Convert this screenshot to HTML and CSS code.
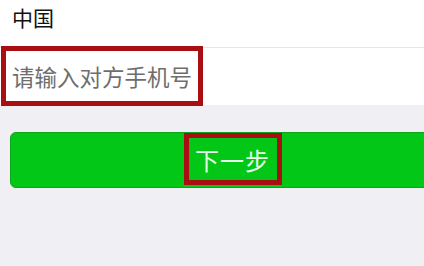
FILE: index.html
```html
<!DOCTYPE html>
<html lang="zh">
<head>
<meta charset="utf-8">
<link rel="stylesheet" href="styles.css">
</head>
<body>
<div class="page">
  <div class="header"><span class="country">中国</span></div>
  <div class="input-row">
    <div class="mark input-mark"><span class="placeholder">请输入对方手机号</span></div>
  </div>
  <div class="actions">
    <div class="btn"><span class="mark btn-mark">下一步</span></div>
  </div>
</div>
</body>
</html>
```
FILE: styles.css
```css
html, body {
  margin: 0;
  padding: 0;
}
body {
  width: 424px;
  height: 266px;
  overflow: hidden;
  background: #efeff4;
  font-family: "Noto Sans CJK SC", "Noto Sans", sans-serif;
}
.page {
  width: 424px;
  height: 266px;
  overflow: hidden;
}
.header {
  height: 47px;
  background: #ffffff;
  padding-left: 12px;
  box-sizing: border-box;
}
.country {
  display: block;
  font-size: 21px;
  line-height: 34px;
  color: #111;
}
.input-row {
  height: 58px;
  background: #ffffff;
  border-top: 1px solid #e6e6e6;
  box-sizing: border-box;
  position: relative;
}
.mark {
  border: 5px solid #a90f12;
  box-sizing: border-box;
}
.input-mark {
  position: absolute;
  top: -2px;
  left: 1px;
  width: 202px;
  height: 60px;
  display: flex;
  align-items: center;
  padding-left: 6px;
}
.placeholder {
  font-size: 22.5px;
  color: #6e6e6e;
  white-space: nowrap;
}
.actions {
  padding-top: 27px;
  padding-left: 10px;
}
.btn {
  width: 440px;
  height: 56px;
  background: #03c716;
  border: 1px solid #0aa51a;
  border-radius: 6px;
  box-sizing: border-box;
  display: flex;
  justify-content: center;
  align-items: flex-start;
}
.btn-mark {
  width: 98px;
  height: 52px;
  margin-left: 5px;
  display: flex;
  align-items: center;
  justify-content: center;
  color: #e6ffe6;
  font-size: 24px;
  letter-spacing: 1px;
}
```
